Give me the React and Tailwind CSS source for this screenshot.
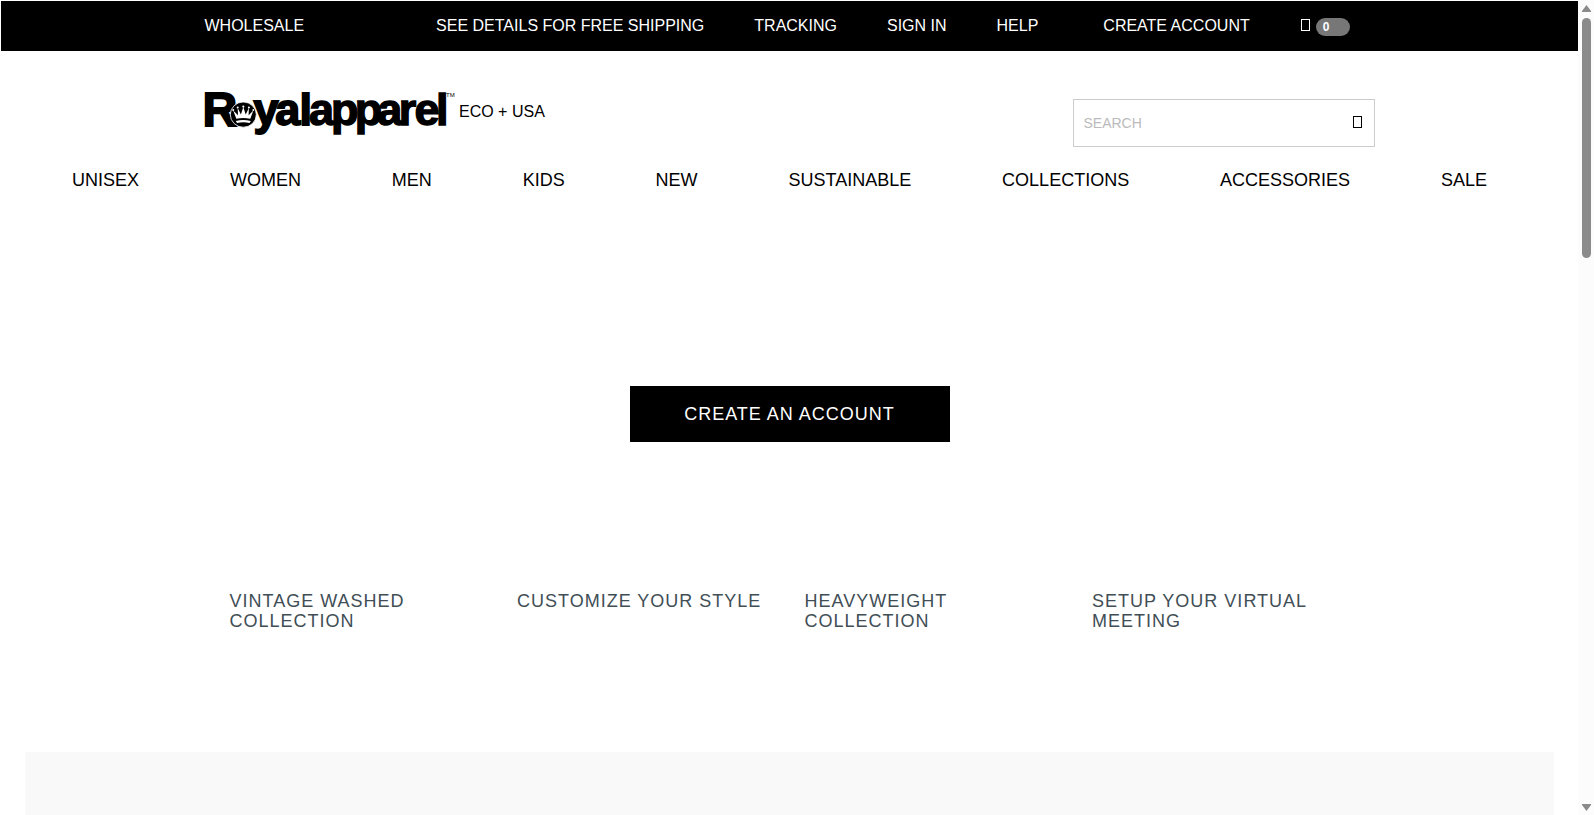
import React from 'react'

const navItems = [
  'UNISEX',
  'WOMEN',
  'MEN',
  'KIDS',
  'NEW',
  'SUSTAINABLE',
  'COLLECTIONS',
  'ACCESSORIES',
  'SALE',
]

const promos = [
  'VINTAGE WASHED COLLECTION',
  'CUSTOMIZE YOUR STYLE',
  'HEAVYWEIGHT COLLECTION',
  'SETUP YOUR VIRTUAL MEETING',
]

const Logo = () => (
  <svg className="h-[70px] w-[260px] shrink-0" viewBox="199 76 260 70" fontFamily="'Liberation Sans', Arial, sans-serif" fontWeight="bold">
    <g stroke="#000" strokeWidth="1.8">
      <text x="202.6" y="124.6" fontSize="48">R</text>
      <text x="253.6 275.3 299.5" y="124" fontSize="45">yal</text>
    </g>
    <text x="309 331 354.7 377.2 398.7 414.5 436" y="124.2" fontSize="45" stroke="#000" strokeWidth="1.4">apparel</text>
    <ellipse cx="243.3" cy="113.6" rx="13" ry="12.6" stroke="#fff" strokeWidth="0.8" />
    {/* crown */}
    <g fill="#fff" transform="translate(0 -0.6)">
      <path d="M236.3 118.4L233.2 110l4.8 4.8-.3-7.3 3.2 6.5 2.4-7.5 2.4 7.5 3.2-6.5-.3 7.3 4.8-4.8-3.1 8.4q-7-1.5-14 0z" />
      <circle cx="233.2" cy="109.6" r="1" />
      <circle cx="237.7" cy="107.2" r="1" />
      <circle cx="243.3" cy="106.2" r="1.1" />
      <circle cx="248.9" cy="107.2" r="1" />
      <circle cx="253.4" cy="109.6" r="1" />
      <path d="M235.8 120.5q7.5-1.6 15 0l-1.2 2q-6.3-1.3-12.6 0z" />
    </g>
    <text x="446" y="95.5" fontSize="6" fontWeight="normal">TM</text>
  </svg>
)

// empty box shown where the icon font has no glyph
const MissingGlyph = ({ className }) => (
  <span className={`h-3 w-[9px] shrink-0 border ${className}`} />
)

const TopBar = () => (
  <div className="flex h-[50px] items-center bg-black pb-px pl-[203.5px] text-base whitespace-nowrap text-white">
    <a>WHOLESALE</a>
    <a className="ml-[132px]">SEE DETAILS FOR FREE SHIPPING</a>
    <a className="ml-[50px]">TRACKING</a>
    <a className="ml-[50px]">SIGN IN</a>
    <a className="ml-[50px]">HELP</a>
    <a className="ml-[65px]">CREATE ACCOUNT</a>
    <MissingGlyph className="mb-px ml-[51px] border-white" />
    <span className="mt-[3px] ml-1.5 flex h-[18px] w-[34px] items-center rounded-[9px] bg-[#777] pl-[7px] text-xs font-bold">0</span>
  </div>
)

const Scrollbar = () => (
  <div className="flex w-4 shrink-0 flex-col items-center bg-[#fcfcfc] pt-[5px] pb-1">
    <svg className="h-[7px] w-[9px]" viewBox="0 0 9 7" fill="#8b8b8b">
      <path d="M4.5 0L9 6v1H0V6z" />
    </svg>
    <div className="mt-1.5 h-[240px] w-[9px] rounded-full bg-[#8b8b8b]" />
    <svg className="mt-auto h-[7px] w-[9px]" viewBox="0 0 9 7" fill="#8b8b8b">
      <path d="M4.5 7L9 1V0H0v1z" />
    </svg>
  </div>
)

export default function App() {
  return (
    <div className="flex h-[815px] w-[1594px] overflow-hidden bg-white font-['Liberation_Sans',Arial,sans-serif] text-black">
      <div className="flex w-[1578px] flex-col pt-px pl-px">
        <TopBar />

        <header className="flex h-[109px] pl-[198px]">
          <div className="flex items-start pt-[26px]">
            <Logo />
            <span className="mt-[23px] text-base whitespace-nowrap">ECO + USA</span>
          </div>
          <div className="mt-12 mr-[203px] ml-auto flex h-12 w-[302px] items-center justify-between border border-[#ccc] pr-3 pl-[9.5px]">
            <input
              className="w-48 text-sm outline-none placeholder:text-[#bbb]"
              placeholder="SEARCH"
            />
            <MissingGlyph className="mb-0.5 border-black" />
          </div>
        </header>

        <nav className="flex h-10 items-center gap-[90.9px] pl-[71px] text-lg whitespace-nowrap">
          {navItems.map((item) => (
            <a key={item}>{item}</a>
          ))}
        </nav>

        <section className="flex h-[391px] justify-center pt-[186px]">
          <button className="h-14 w-80 bg-black text-lg tracking-[1px] text-white">CREATE AN ACCOUNT</button>
        </section>

        <section className="ml-[228.5px] grid h-[161px] w-[1150px] grid-cols-4 self-start text-lg leading-5 tracking-[1px] text-[#414e55]">
          {promos.map((title) => (
            <h3 key={title} className="pr-9">{title}</h3>
          ))}
        </section>

        <div className="mx-6 flex-1 bg-[#f9f9f9]" />
      </div>
      <Scrollbar />
    </div>
  )
}
